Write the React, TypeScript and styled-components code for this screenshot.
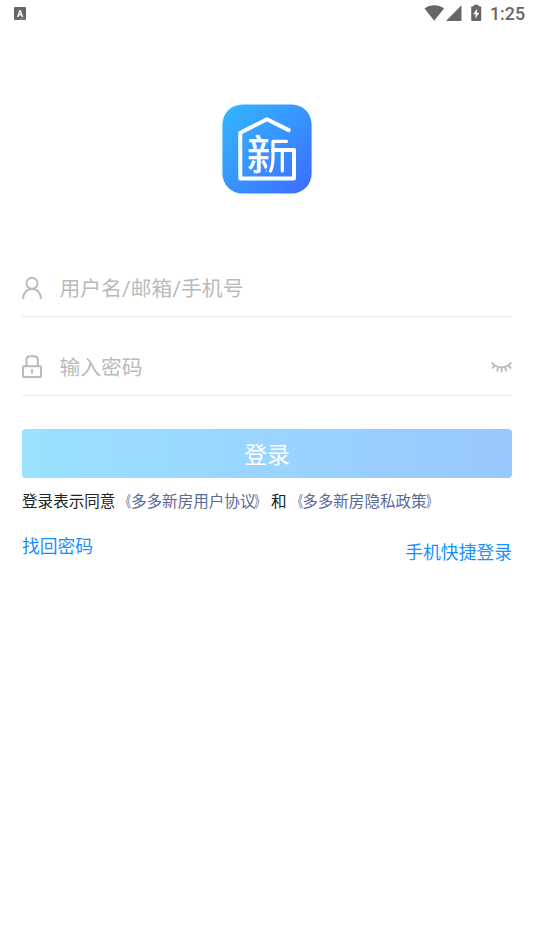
import React from "react";
import styled, { createGlobalStyle } from "styled-components";

const GlobalStyle = createGlobalStyle`
  * { box-sizing: border-box; }
  body { margin: 0; background: #fff; }
`;

const Screen = styled.main`
  width: 534px;
  height: 950px;
  overflow: hidden;
  display: flex;
  flex-direction: column;
  background: #fff;
  font-family: Roboto, "Noto Sans CJK SC", sans-serif;
`;

const StatusBar = styled.header`
  height: 27px;
  padding: 0 9px 0 14px;
  display: flex;
  align-items: center;
  justify-content: space-between;
  color: #666;
`;

const StatusIcons = styled.div`
  display: flex;
  align-items: center;
`;

const Clock = styled.span`
  margin-left: 7px;
  font: 500 17.8px/27px Roboto, sans-serif;
`;

const LogoArea = styled.div`
  height: 168px;
  padding-top: 77px;
  display: flex;
  justify-content: center;
`;

const Form = styled.form`
  padding: 65px 22px 0;
  display: flex;
  flex-direction: column;
`;

const Field = styled.label<{ $line: string; $height: number }>`
  height: ${(p) => p.$height}px;
  border-bottom: 1px solid ${(p) => p.$line};
  padding-bottom: 16px;
  display: flex;
  align-items: flex-end;
  svg { flex: none; }
`;

const Input = styled.input<{ $tracking?: number }>`
  flex: 1;
  min-width: 0;
  height: 30px;
  margin: 0 0 -4px 17.5px;
  padding: 0;
  border: 0;
  outline: 0;
  background: none;
  color: #333;
  font: 400 20.77px/30px Roboto, "Noto Sans CJK SC", sans-serif;
  letter-spacing: ${(p) => p.$tracking ?? 0}px;
  &::placeholder { color: #bababa; opacity: 1; }
`;

const SubmitButton = styled.button`
  height: 49px;
  margin-top: 33px;
  padding: 0;
  border: 0;
  border-radius: 4px;
  background: linear-gradient(90deg, #99e2ff, #99c7ff);
  color: #fff;
  font: 400 22.8px/49px "Noto Sans CJK SC", sans-serif;
`;

const Agreement = styled.p`
  margin: 12px 0 0;
  font-size: 15.57px;
  line-height: 24px;
  color: #222;
  white-space: nowrap;
`;

const PolicyLink = styled.a`
  color: #576b95;
`;

const Bracket = styled.span<{ $side: "left" | "right" }>`
  display: inline-block;
  width: 1em;
  transform: ${(p) => (p.$side === "left" ? "translateX(0.5px)" : "translateX(-1px)")} scaleX(0.7);
  transform-origin: ${(p) => (p.$side === "left" ? "right" : "left")} center;
`;

const Links = styled.nav`
  margin-top: 20px;
  display: flex;
  justify-content: space-between;
`;

const TextLink = styled.a<{ $drop?: number }>`
  margin-top: ${(p) => p.$drop ?? 0}px;
  color: #1890ff;
  font-size: 17.8px;
  line-height: 26px;
`;

const KeyboardIcon = () => (
  <svg width="12" height="13" viewBox="0 0 12 13">
    <rect width="12" height="13" rx="1" fill="#666" />
    <text x="6" y="9.8" textAnchor="middle" fill="#fff" fontFamily="Roboto" fontWeight="700" fontSize="9">A</text>
    <path d="M6 11.8h5" stroke="#ccc" strokeWidth=".8" strokeDasharray="1 .7" />
  </svg>
);

const SignalIcons = () => (
  <svg width="59" height="20" viewBox="424 4 59 20" fill="#666">
    <path d="M424.500 8.500C430 4.300 438.500 4.300 444 8.500L434.200 20.800Z" />
    <path d="M461.500 5.200V20.900H446Z" />
    <path d="M474 4.800h4.500v1.500h1.700a1 1 0 0 1 1 1V20a1 1 0 0 1-1 1h-8a1 1 0 0 1-1-1V7.300a1 1 0 0 1 1-1h1.800Z" />
    <path d="M477.200 8.500l-4 5.800h2.300v4.500l3.700-6h-2.500Z" fill="#fff" />
  </svg>
);

const Logo = () => (
  <svg width="90" height="90" viewBox="0 0 90 90">
    <defs>
      <linearGradient id="brand" x1="0" y1="0" x2="1" y2="1">
        <stop offset="0" stopColor="#33b8ff" />
        <stop offset=".5" stopColor="#3894ff" />
        <stop offset="1" stopColor="#3b6aff" />
      </linearGradient>
      <clipPath id="roomSide">
        <path d="M22 26H47V54L43.800 70H22Z" />
      </clipPath>
    </defs>
    <rect x=".4" y=".4" width="89.200" height="89.200" rx="20" fill="url(#brand)" />
    <g fill="none" stroke="#fff" strokeWidth="4" strokeLinecap="round" strokeLinejoin="round">
      <path d="M66.700 26.100L45 15.300 18.300 28.800V74.500H72V46H51" />
      <path d="M64.500 37.300H51V53Q51 62 48.500 67M60.300 46V67" strokeWidth="3.200" />
    </g>
    <text x="25" y="65.500" fill="#fff" stroke="#fff" strokeWidth=".7" strokeLinejoin="round" fontFamily="Noto Sans CJK SC" fontWeight="400" fontSize="41" clipPath="url(#roomSide)">新</text>
  </svg>
);

const UserIcon = () => (
  <svg width="20" height="24" viewBox="0 0 20 24" fill="none" stroke="#bababa" strokeWidth="1.900">
    <ellipse cx="10" cy="7.200" rx="5.500" ry="5.500" />
    <path d="M1 23C1 17.500 4.500 12.900 10 12.900S19 17.500 19 23" />
  </svg>
);

const LockIcon = () => (
  <svg width="20" height="24" viewBox="0 0 20 24" fill="none" stroke="#bababa" strokeWidth="2">
    <rect x="1" y="11.300" width="18" height="10.700" rx=".8" />
    <path d="M4.500 11V4.800Q4.500 1.300 8 1.300h4.500Q15.800 1.300 15.800 4.800V11" />
    <path d="M10 14.700v4" strokeWidth="1.700" />
    <circle cx="10" cy="15.400" r=".5" strokeWidth="1.600" />
  </svg>
);

const ClosedEyeIcon = () => (
  <svg width="22" height="24" viewBox="0 0 22 24" fill="none" stroke="#bababa" strokeWidth="1.900" strokeLinecap="round">
    <path d="M2.300 8C7.200 13.700 16 13.700 20.700 8M4.700 10.400L2.600 13M8.400 12.200L7.200 15.600M11.600 12.600v4M14.900 12.100l1.200 3.500M18.400 10.300l2.200 2.700" />
  </svg>
);

export default function App() {
  return (
    <Screen>
      <GlobalStyle />
      <StatusBar>
        <KeyboardIcon />
        <StatusIcons>
          <SignalIcons />
          <Clock>1:25</Clock>
        </StatusIcons>
      </StatusBar>
      <LogoArea><Logo /></LogoArea>
      <Form onSubmit={(e) => e.preventDefault()}>
        <Field $line="#e8e8e8" $height={57}>
          <UserIcon />
          <Input $tracking={0.08} aria-label="用户名" placeholder="用户名/邮箱/手机号" />
        </Field>
        <Field $line="#eeeeee" $height={79}>
          <LockIcon />
          <Input type="password" aria-label="密码" placeholder="输入密码" />
          <ClosedEyeIcon />
        </Field>
        <SubmitButton>登录</SubmitButton>
        <Agreement>
          登录表示同意<PolicyLink><Bracket $side="left">《</Bracket>多多新房用户协议<Bracket $side="right">》</Bracket></PolicyLink>和<PolicyLink><Bracket $side="left">《</Bracket>多多新房隐私政策<Bracket $side="right">》</Bracket></PolicyLink>
        </Agreement>
        <Links>
          <TextLink>找回密码</TextLink>
          <TextLink $drop={6}>手机快捷登录</TextLink>
        </Links>
      </Form>
    </Screen>
  );
}
